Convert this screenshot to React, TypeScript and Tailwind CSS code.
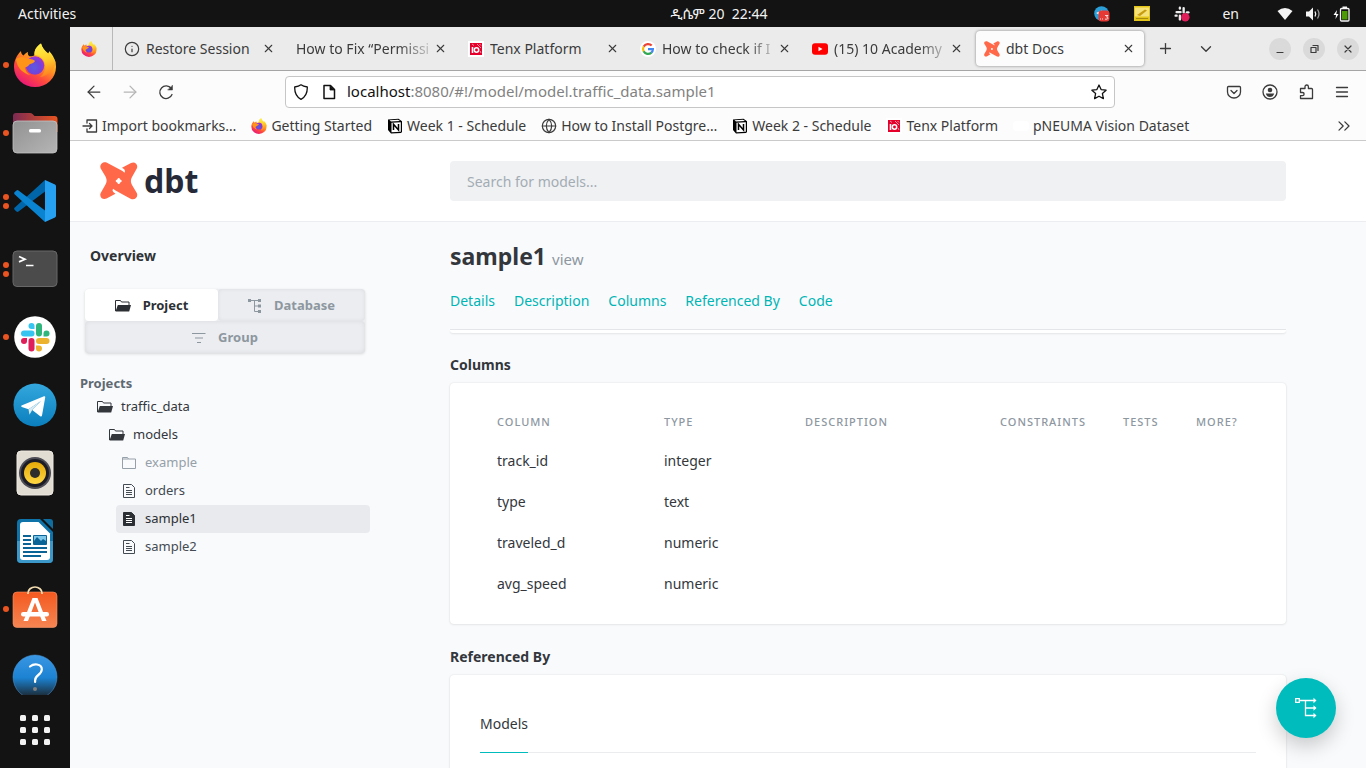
import { useId, type ReactNode } from 'react';
import { ArrowLeft, ArrowRight, ChevronDown, ChevronsRight, Globe, Info, Plus, X } from 'lucide-react';

function FirefoxIcon({ size }: { size: number }) {
  const id = useId();
  return (
    <svg width={size} height={size} viewBox="0 0 44 44" aria-hidden="true">
      <defs>
        <linearGradient id={`${id}body`} x1="0.85" y1="0.05" x2="0.25" y2="1">
          <stop offset="0.1" stopColor="#ffe73c" />
          <stop offset="0.4" stopColor="#ff9a1f" />
          <stop offset="0.68" stopColor="#ff4a3d" />
          <stop offset="1" stopColor="#e6127f" />
        </linearGradient>
        <linearGradient id={`${id}flame`} x1="0.4" y1="0" x2="0.6" y2="1">
          <stop offset="0" stopColor="#fff146" />
          <stop offset="0.5" stopColor="#ffcd2b" />
          <stop offset="1" stopColor="#ff7a1f" />
        </linearGradient>
        <radialGradient id={`${id}ball`} cx="0.45" cy="0.6" r="0.6">
          <stop offset="0" stopColor="#5a5be0" />
          <stop offset="0.6" stopColor="#7442d8" />
          <stop offset="1" stopColor="#a531d2" />
        </radialGradient>
      </defs>
      <path d="M8 8c0 2 1 4 2.500 4.500C12 10.500 13.500 9.500 15 9c-.5 2 0 3.500 1.500 4.300 2 .2 3.500 0 5-1.300C21 7 24 3 28 .5c1 4 4 7 6.500 10.500 1-.5 1.600-1.600 1.500-3 4.500 4.500 7 10 7 16a21 20 0 0 1-42 0C1 17 4 12 8 8Z" fill={`url(#${id}body)`} />
      <path d="M28 .5c-4 2.500-7 6.500-6.500 11.500 5 .5 9.500 3.500 10.500 9 1 5-1 10-5 13 8-1 15-7 15.500-15-2-7-13-10-14.500-18.500Z" fill={`url(#${id}flame)`} />
      <circle cx="22" cy="22.500" r="9.300" fill={`url(#${id}ball)`} />
      <path d="M3 16c5-3 9-2 12 0 3 0 6 .5 7 2-1 2.500-5 2.500-6 4-1.500 2-4 2.500-4 2 0 4 3 7 6 8-8-1-14-7-15-16Z" fill="#ff9418" />
    </svg>
  );
}

function FilesIcon() {
  return (
    <svg width="46" height="42" viewBox="0 0 46 42" aria-hidden="true">
      <defs>
        <linearGradient id="filesBack"><stop offset="0" stopColor="#7b2a52" /><stop offset="1" stopColor="#e95420" /></linearGradient>
        <linearGradient id="filesFront" x2="1" y2="1"><stop offset="0" stopColor="#929292" /><stop offset="1" stopColor="#b5b5b5" /></linearGradient>
      </defs>
      <path d="M1 20V4q0-3 3-3h14q1.500 0 2.500 1l2 2h20q3 0 3 3v13Z" fill="url(#filesBack)" />
      <rect x="1" y="9" width="44" height="32" rx="4" fill="url(#filesFront)" stroke="#c4c4c4" strokeWidth=".8" />
      <rect x="17" y="17" width="12" height="3.500" rx="1.500" fill="#fff" />
    </svg>
  );
}

function CodeIcon() {
  return (
    <svg width="42" height="42" viewBox="0 0 42 42" aria-hidden="true">
      <path d="M4.500 31.500q-1 .8-2 0L.8 30q-1.300-1.200 0-2.400L31 0v11.500Z" fill="#0065a9" />
      <path d="M4.500 10.500q-1-.8-2 0L.8 12q-1.300 1.200 0 2.400L31 42V30.500Z" fill="#0a84d0" />
      <path d="M31 0l10 4.500q1 .6 1 1.800v29.400q0 1.200-1 1.800L31 42V0Z" fill="#26a1f2" />
    </svg>
  );
}

function TerminalIcon() {
  return (
    <svg width="46" height="38" viewBox="0 0 46 38" aria-hidden="true">
      <rect x="1" y="1" width="44" height="35.500" rx="4" fill="#4b4b4b" stroke="#686868" />
      <path d="M7 6.500l6 2.700-6 2.700M14 15.500h7.500" fill="none" stroke="#fff" strokeWidth="1.700" />
    </svg>
  );
}

function SlackMark() {
  return (
    <>
      <g fill="#36c5f0"><rect x="7" y="14.500" width="13.500" height="6" rx="3" /><path d="M20.500 13h-3a3 3 0 1 1 3-3Z" /></g>
      <g fill="#2eb67d"><rect x="22" y="7" width="6" height="13.500" rx="3" /><path d="M29.500 20.500v-3a3 3 0 1 1 3 3Z" /></g>
      <g fill="#ecb22e"><rect x="22" y="22" width="13.500" height="6" rx="3" /><path d="M22 29.500h3a3 3 0 1 1-3 3Z" /></g>
      <g fill="#e01e5a"><rect x="14.500" y="22" width="6" height="13.500" rx="3" /><path d="M13 22v3a3 3 0 1 1-3-3Z" /></g>
    </>
  );
}

function SlackIcon() {
  return (
    <svg width="42" height="42" viewBox="0 0 42 42" aria-hidden="true">
      <circle cx="21" cy="21" r="20.800" fill="#fff" />
      <SlackMark />
    </svg>
  );
}

function TelegramIcon() {
  return (
    <svg width="44" height="44" viewBox="0 0 44 44" aria-hidden="true">
      <defs><linearGradient id="tg" y2="1" x2="0"><stop stopColor="#33a7dd" /><stop offset="1" stopColor="#0a7fbd" /></linearGradient></defs>
      <circle cx="22" cy="22" r="21.500" fill="url(#tg)" />
      <path d="M8.500 22.500 31 13.300q1.500-.4 1.200 1.200L29 32.500q-.4 1.500-1.800.7l-8-6.200L28 18 15.500 26.200l-6.700-2.300q-1.200-.7-.3-1.400Z" fill="#fff" />
      <path d="m15.500 26.200 1 5.500 2.700-4.700L28 18Z" fill="#d8ebf5" />
    </svg>
  );
}

function SpeakerIcon() {
  return (
    <svg width="38" height="46" viewBox="0 0 38 46" aria-hidden="true">
      <defs><linearGradient id="cone" x2="0" y2="1"><stop stopColor="#e5aa09" /><stop offset="1" stopColor="#ffd743" /></linearGradient></defs>
      <rect x="1" y="1" width="36" height="44" rx="4" fill="#e2ddd3" stroke="#efeae2" />
      <circle cx="19" cy="23" r="16" fill="#4d4d55" />
      <circle cx="19" cy="23" r="14" fill="#1c1c26" />
      <circle cx="19" cy="23" r="11" fill="url(#cone)" />
      <circle cx="19" cy="23" r="5" fill="#2d2d2d" />
    </svg>
  );
}

function WriterIcon() {
  return (
    <svg width="38" height="46" viewBox="0 0 38 46" aria-hidden="true">
      <path d="M5 1h19l13 13v27q0 4-4 4H5q-4 0-4-4V5q0-4 4-4Z" fill="#0d73a8" />
      <path d="M1 23h36v18q0 4-4 4H5q-4 0-4-4Z" fill="#3b98c8" />
      <path d="M7 4h15.500L34 15.500V39q0 3-3 3H7q-3 0-3-3V7q0-3 3-3Z" fill="#fff" />
      <path d="M27 1h7q3 0 3 3v7Z" fill="#0f6d9f" />
      <g fill="#0b6496">
        <rect x="7" y="17" width="8" height="2" /><rect x="7" y="21" width="8" height="2" /><rect x="7" y="25" width="8" height="2" />
        <rect x="7" y="29" width="24" height="2" /><rect x="7" y="33" width="24" height="2" /><rect x="7" y="37" width="18" height="2" />
      </g>
      <rect x="17" y="17" width="14" height="10" rx="1" fill="#0b6496" />
      <path d="M18 18h12v5l-3-2-2 2-4-4-3 4Z" fill="#7cc6ea" />
    </svg>
  );
}

function SoftwareIcon() {
  return (
    <svg width="46" height="46" viewBox="0 2 46 46" aria-hidden="true">
      <defs><linearGradient id="bag" x2="0" y2="1"><stop stopColor="#f4591f" /><stop offset="1" stopColor="#f58553" /></linearGradient></defs>
      <rect x="1" y="8" width="44" height="35.500" rx="4" fill="url(#bag)" stroke="#f8936a" strokeWidth=".6" />
      <path d="M16 10V9a7 6 0 0 1 14 0v1" fill="none" stroke="#f4dcb1" strokeWidth="1.700" />
      <path d="M20.500 14h5l9 23h-4.500L23 18.500 16 37h-4.500Z" fill="#fff" />
      <rect x="9" y="28" width="28" height="4.500" rx="2.200" fill="#fff" />
    </svg>
  );
}

function HelpIcon() {
  return (
    <svg width="46" height="46" viewBox="0 0 46 46" aria-hidden="true">
      <defs>
        <linearGradient id="help" x2="0" y2="1"><stop stopColor="#3a97e4" /><stop offset=".52" stopColor="#1c82d2" /><stop offset=".94" stopColor="#1c2a35" /></linearGradient>
      </defs>
      <circle cx="23" cy="23" r="22" fill="url(#help)" stroke="#4d9ddf" strokeWidth=".5" />
      <path d="M18 12.500q3-2.500 7-2 5 .8 4.800 5-.2 3-3.500 5.500-3.200 2.400-3.200 5.500v1.500" fill="none" stroke="#fff" strokeWidth="2.200" strokeLinecap="round" />
      <circle cx="23" cy="35" r="2" fill="#827f7c" />
    </svg>
  );
}

function DbtMark({ size }: { size: number }) {
  return (
    <svg width={size} height={size} viewBox="0 0 38 38" className="shrink-0" aria-hidden="true">
      <path d="M7 .8 22.500 9l2 1.800.5-1.800q0-1.600-3-3.200L31 1c4-2 7.500 2 5.800 5.500L32 15c-1.500 3-1.500 5 0 8l4.800 8c1.700 4-1.800 7.500-5.800 6L15.500 28.500 13 26.700l-.5 1.800q0 1.600 3 3.200l-9 4.900c-4 1.900-7.500-2.100-5.800-5.600l4.800-8.500c1.500-3 1.500-4.500 0-8L.7 6.500C-1 3 3-1 7 .8Z" fill="#ff694a" />
      <path d="M18.700 17q.6 1.400 2 2-1.400.6-2 2-.6-1.400-2-2 1.400-.6 2-2Z" fill="#fff" stroke="#fff" strokeWidth="2" strokeLinejoin="round" />
    </svg>
  );
}

function TenxIcon() {
  return (
    <svg width="16" height="16" viewBox="0 0 16 16" className="shrink-0" aria-hidden="true">
      <rect width="16" height="16" fill="#fff" />
      <rect x="2" y="2" width="12" height="12" fill="#e4002b" />
      <path d="M4.500 6v6" stroke="#fff" strokeWidth="1.600" />
      <circle cx="8.500" cy="9" r="2.200" fill="none" stroke="#fff" strokeWidth="1.500" />
      <path d="M4 3l2 1.500M9 3l4 4M11.500 3l1.500 1.500M12 10l1 2" stroke="#ffb3c0" strokeWidth=".8" />
    </svg>
  );
}

function NotionIcon() {
  return (
    <svg width="16" height="16" viewBox="0 0 16 16" className="shrink-0" aria-hidden="true">
      <path d="M1 1.500 11.500.8 15 3.200V14l-1 1-10 .5L1 12Z" fill="#000" />
      <path d="M2.500 2.200 11 1.700l2 1.300-9 .6ZM4.500 4.800l9.300-.6v9.600l-9.300.5Z" fill="#fff" />
      <path d="M6.500 12V6.300l5 5.800V6" fill="none" stroke="#000" strokeWidth="1.500" />
    </svg>
  );
}

function GoogleIcon() {
  return (
    <svg width="16" height="16" viewBox="0 0 16 16" className="shrink-0" aria-hidden="true">
      <circle cx="8" cy="8" r="8" fill="#fff" />
      <g fill="none" strokeWidth="2.200">
        <path d="M11.700 4.600A5 5 0 0 0 3.700 5.600" stroke="#ea4335" />
        <path d="M3.700 5.500a5 5 0 0 0 0 5" stroke="#fbbc05" />
        <path d="M3.600 10.300a5 5 0 0 0 7.800 1.300" stroke="#34a853" />
        <path d="M11.300 11.700A5 5 0 0 0 12.900 8.200H8" stroke="#4285f4" />
      </g>
    </svg>
  );
}

function YouTubeIcon() {
  return (
    <svg width="16" height="16" viewBox="0 0 16 16" className="shrink-0" aria-hidden="true">
      <rect x="0" y="2.300" width="16" height="11.400" rx="3" fill="#f00" />
      <path d="M6.500 5.700v4.600l4-2.300Z" fill="#fff" />
    </svg>
  );
}

type LineIconProps = { children: ReactNode; size?: number; width?: number; className?: string };
function LineIcon({ children, size = 16, width = 1.3, className = '' }: LineIconProps) {
  return (
    <svg width={size} height={size} viewBox="0 0 16 16" fill="none" stroke="currentColor" strokeWidth={width} strokeLinecap="round" strokeLinejoin="round" className={`shrink-0 ${className}`} aria-hidden="true">
      {children}
    </svg>
  );
}

function FolderOpenIcon() {
  return (
    <svg width="16" height="12" viewBox="0 0 16 12" aria-hidden="true">
      <path d="M.5 11V.5h5l1 1.500h7.500v3" fill="none" stroke="currentColor" />
      <path d="M.5 11.500 2.800 5H16l-1.800 6.500Z" fill="currentColor" />
    </svg>
  );
}

function FolderIcon() {
  return (
    <svg width="16" height="12" viewBox="0 0 16 12" aria-hidden="true" fill="none" stroke="currentColor">
      <path d="M1.500 11.500V.5h5l1 1.500h7v9.500ZM1.500 2h6" />
    </svg>
  );
}

function DocIcon({ filled }: { filled?: boolean }) {
  return (
    <svg width="14" height="14" viewBox="0 0 14 14" aria-hidden="true">
      <path d="M1.500.5h8l3 3v10h-11Z" fill={filled ? 'currentColor' : 'none'} stroke="currentColor" />
      <path d="M4 3.500h3.500M4 6.500h6M4 8.500h6M4 10.500h6" stroke={filled ? '#fff' : 'currentColor'} />
    </svg>
  );
}

function TreeIcon() {
  return (
    <svg width="14" height="14" viewBox="0 0 14 14" aria-hidden="true">
      <path d="M2 1.500h9M6.500 1.500v11H11M6.500 7H11" fill="none" stroke="currentColor" />
      <path d="M0 0h3v3H0ZM10 0h3v3h-3ZM10 5.500h3v3h-3ZM10 11h3v3h-3Z" fill="currentColor" />
    </svg>
  );
}

type DockApp = { name: string; icon: ReactNode; windows: number };
const dockApps: DockApp[] = [
  { name: 'Firefox', icon: <FirefoxIcon size={44} />, windows: 1 },
  { name: 'Files', icon: <FilesIcon />, windows: 1 },
  { name: 'Code', icon: <CodeIcon />, windows: 2 },
  { name: 'Terminal', icon: <TerminalIcon />, windows: 2 },
  { name: 'Slack', icon: <SlackIcon />, windows: 1 },
  { name: 'Telegram', icon: <TelegramIcon />, windows: 0 },
  { name: 'Rhythmbox', icon: <SpeakerIcon />, windows: 0 },
  { name: 'Writer', icon: <WriterIcon />, windows: 0 },
  { name: 'Software', icon: <SoftwareIcon />, windows: 1 },
  { name: 'Help', icon: <HelpIcon />, windows: 0 },
];

function TopBar() {
  return (
    <header className="grid h-[27px] shrink-0 grid-cols-3 items-center bg-[#131313] text-sm text-[#f2f2f2]">
      <button type="button" className="justify-self-start pl-[18px]">Activities</button>
      <button type="button" className="justify-self-center whitespace-pre pl-[72px]">{'ዲሴም 20  22:44'}</button>
      <div className="flex items-center justify-self-end pr-4">
        <svg width="16" height="16" viewBox="0 0 16 16" aria-hidden="true">
          <circle cx="7.500" cy="7.500" r="7.300" fill="#2b9fd8" />
          <path d="m2 7 6-2.500-1 5Z" fill="#fff" />
          <rect x="4.500" y="4.500" width="11" height="11" rx="3" fill="#e53935" />
          <path d="M6 13h1M8 13h1M11 9.500h3l-1.500 1.500q1.500.2 1.500 1.200 0 1.300-3 1" stroke="#fff" fill="none" strokeWidth=".8" />
        </svg>
        <svg width="16" height="15" viewBox="0 0 16 15" className="ml-6" aria-hidden="true">
          <rect width="16" height="15" fill="#e3c419" />
          <rect x="1" y="1.500" width="14" height="9" fill="#f5e27a" />
          <path d="m3 9 8-5.500 2 1L6 10Z" fill="#c79c10" />
          <path d="M2 12.500h12" stroke="#a88a0c" />
        </svg>
        <svg width="16" height="16" viewBox="4 4 34 34" className="ml-6" aria-hidden="true">
          <g fill="#eee"><rect x="7" y="14.500" width="13.500" height="5" rx="2.500" /><rect x="14" y="5" width="5" height="7" rx="2.500" /><rect x="22" y="6" width="5" height="14" rx="2.500" /><rect x="29" y="15" width="8" height="5" rx="2.500" /><rect x="5" y="22" width="7" height="5" rx="2.500" /><rect x="14" y="22" width="5" height="13" rx="2.500" /></g>
          <circle cx="28" cy="28" r="9" fill="#e01e5a" />
        </svg>
        <span className="ml-8">en</span>
        <svg width="16" height="14" viewBox="0 0 16 14" className="ml-[38px]" aria-hidden="true"><path d="M.5 4Q8-2 15.500 4L8 13Z" fill="#f4f4f4" /></svg>
        <svg width="16" height="14" viewBox="0 0 16 14" className="ml-3" aria-hidden="true">
          <path d="M1 4.500h3l4-4v13l-4-4H1Z" fill="#f4f4f4" />
          <path d="M10 4.500q1.500 2.500 0 5" stroke="#f4f4f4" strokeWidth="1.300" fill="none" />
          <path d="M12.500 2.500q3 4.500 0 9" stroke="#999" strokeWidth="1.300" fill="none" />
        </svg>
        <svg width="17" height="16" viewBox="0 0 17 16" className="ml-3" aria-hidden="true">
          <path d="M4 4 .5 9H3l-.5 4L5.500 8H3.300Z" fill="#fff" />
          <rect x="7.500" y="2.500" width="8.500" height="12.500" rx="1" fill="none" stroke="#f4f4f4" strokeWidth="1.300" />
          <rect x="9.500" y=".5" width="4.500" height="2" fill="#f4f4f4" />
          <rect x="9" y="5" width="5.500" height="8.500" fill="#4e9a06" />
        </svg>
      </div>
    </header>
  );
}

function Dock() {
  return (
    <nav aria-label="Dock" className="flex w-[70px] shrink-0 flex-col bg-[#131313]">
      <ul className="min-h-0 flex-1 overflow-hidden pt-1">
        {dockApps.map((app) => (
          <li key={app.name} className="grid h-17 grid-cols-[12px_46px_12px] items-center">
            <span className="flex flex-col items-end gap-[3px] pr-[3px]">
              {Array.from({ length: app.windows }, (_, i) => (
                <span key={i} className="size-1.5 rounded-full bg-[#e95420]" />
              ))}
            </span>
            <button type="button" aria-label={app.name} className="flex justify-center">{app.icon}</button>
          </li>
        ))}
      </ul>
      <button type="button" aria-label="Show applications" className="flex h-[73px] shrink-0 justify-center pt-5">
        <svg width="30" height="30" viewBox="0 0 30 30" aria-hidden="true" fill="#f2f2f2">
          {[0, 12, 24].map((y) => [0, 12, 24].map((x) => <rect key={`${x}-${y}`} x={x} y={y} width="6" height="6" rx="1.500" />))}
        </svg>
      </button>
    </nav>
  );
}

type Tab = { title: string; icon?: ReactNode; active?: boolean };
const tabs: Tab[] = [
  { title: 'Restore Session', icon: <Info size={16} strokeWidth={1.8} className="shrink-0" /> },
  { title: 'How to Fix “Permissi' },
  { title: 'Tenx Platform', icon: <TenxIcon /> },
  { title: 'How to check if I', icon: <GoogleIcon /> },
  { title: '(15) 10 Academy', icon: <YouTubeIcon /> },
  { title: 'dbt Docs', icon: <DbtMark size={16} />, active: true },
];
const longTitles = ['How to Fix “Permissi', 'How to check if I', '(15) 10 Academy'];

function TabStrip() {
  return (
    <div className="flex h-11 shrink-0 items-stretch border-b border-[#a5a5a5] bg-[#ebebeb] text-sm text-[#3b3b3b]">
      <button type="button" aria-label="Firefox View" className="flex w-[43px] shrink-0 items-center justify-center border-r border-[#b8b8b8] pr-1">
        <FirefoxIcon size={16} />
      </button>
      <div role="tablist" className="flex min-w-0 pl-px">
        {tabs.map((tab) => (
          <div key={tab.title} className="w-[172px] min-w-0 px-0.5 py-1">
            <div className={`flex h-full items-center rounded pl-2 pr-[7px] ${tab.active ? 'bg-[#fcfcfc] shadow-[0_0_3px_rgba(0,0,0,0.45)]' : ''}`}>
              <button type="button" role="tab" aria-selected={!!tab.active} className="flex min-w-0 flex-1 items-center gap-1.5 pt-px">
                {tab.icon}
                <span className={`min-w-0 flex-1 overflow-hidden text-left whitespace-nowrap ${longTitles.includes(tab.title) ? '[mask-image:linear-gradient(to_right,black_75%,transparent_105%)]' : ''}`}>{tab.title}</span>
              </button>
              <button type="button" aria-label={`Close ${tab.title}`} className="flex w-[18px] shrink-0 justify-center"><X size={13} strokeWidth={2} /></button>
            </div>
          </div>
        ))}
      </div>
      <div className="flex flex-1 items-center pl-[11px]">
        <button type="button" aria-label="New tab"><Plus size={17} strokeWidth={1.8} /></button>
        <button type="button" aria-label="List all tabs" className="ml-[23px]"><ChevronDown size={18} strokeWidth={1.8} /></button>
        <div className="ml-auto flex gap-3 pr-[7px]">
          {[
            ['Minimize', 'M5 11.500h6'],
            ['Restore', 'M5 6.500h5v5H5ZM7 4.500h5v5'],
            ['Close window', 'M5 5l6 6M11 5l-6 6'],
          ].map(([label, d]) => (
            <button key={label} type="button" aria-label={label} className="flex size-[22px] items-center justify-center rounded-full bg-[#dadada]">
              <LineIcon width={1.2}>
                <path d={d} />
              </LineIcon>
            </button>
          ))}
        </div>
      </div>
    </div>
  );
}

function NavBar() {
  const button = 'flex w-9 justify-center';
  return (
    <div className="flex h-[41px] shrink-0 items-center bg-[#fcfcfc] px-1.5 text-[#3b3b3b]">
      <button type="button" aria-label="Back" className={button}><ArrowLeft size={20} strokeWidth={1.5} /></button>
      <button type="button" aria-label="Forward" className={`${button} text-[#b5b5b5]`}><ArrowRight size={20} strokeWidth={1.5} /></button>
      <button type="button" aria-label="Reload" className={button}>
        <LineIcon><path d="M14 10.500A6.300 6.300 0 1 1 13.200 4.500" /><path d="M14.500 1.500V6H10Z" fill="currentColor" strokeWidth=".5" /></LineIcon>
      </button>
      <div className="mx-[101px] flex h-8 min-w-0 flex-1 items-center rounded border border-[#c6c6c6] bg-white px-[7px] text-[15px] text-[#111]">
        <LineIcon><path d="M8 .8c2 1.500 4 1.900 6.300 2.200.2 6-1.800 10-6.300 12.300C3.500 13 1.500 9 1.700 3 4 2.700 6 2.300 8 .8Z" /></LineIcon>
        <LineIcon className="ml-3" width={1.5}><path d="M3 1.500h6.500L13.500 5.500V14.500H3Z" /><path d="M9 1.500V6h4.500Z" fill="currentColor" strokeWidth=".8" /></LineIcon>
        <div role="textbox" aria-label="Address" className="ml-2.5 min-w-0 flex-1 overflow-hidden whitespace-nowrap">
          localhost<span className="text-[#828282]">:8080/#!/model/model.traffic_data.sample1</span>
        </div>
        <button type="button" aria-label="Bookmark this page">
          <LineIcon><path d="m8 1 2.100 4.600 5 .6-3.700 3.400 1 5L8 12.200l-4.400 2.400 1-5L.9 6.200l5-.6Z" /></LineIcon>
        </button>
      </div>
      <button type="button" aria-label="Save to Pocket" className={button}><LineIcon><path d="M2.500 2.500h11q1 0 1 1V8a6.500 6 0 0 1-13 0V3.500q0-1 1-1ZM5 6.500l3 3 3-3" /></LineIcon></button>
      <button type="button" aria-label="Account" className={button}>
        <LineIcon><circle cx="8" cy="8" r="7" /><circle cx="8" cy="6" r="2.300" fill="currentColor" stroke="none" /><path d="M3.800 9.500h8.400q-1 3.500-4.200 3.500t-4.200-3.500Z" fill="currentColor" stroke="none" /></LineIcon>
      </button>
      <button type="button" aria-label="Extensions" className={button}>
        <LineIcon><path d="M7 4.500V2.700a1.700 1.700 0 0 1 3.400 0v1.800h3.100q1 0 1 1v9H2.500V11.700h2a1.600 1.600 0 0 0 0-3.200H2.500v-4Z" /></LineIcon>
      </button>
      <button type="button" aria-label="Menu" className={button}><LineIcon><path d="M2.500 3.500h11M2.500 8h11M2.500 12.500h11" /></LineIcon></button>
    </div>
  );
}

const bookmarks: { title: string; icon: ReactNode }[] = [
  { title: 'Import bookmarks…', icon: <LineIcon><path d="M5 5V2h9.500v12H5v-3M1 8h8.500M7.500 5.500 10 8l-2.500 2.500" /></LineIcon> },
  { title: 'Getting Started', icon: <FirefoxIcon size={16} /> },
  { title: 'Week 1 - Schedule', icon: <NotionIcon /> },
  { title: 'How to Install Postgre…', icon: <Globe size={16} strokeWidth={1.8} /> },
  { title: 'Week 2 - Schedule', icon: <NotionIcon /> },
  { title: 'Tenx Platform', icon: <TenxIcon /> },
  { title: 'pNEUMA Vision Dataset', icon: <span className="h-2.5 w-4 rounded bg-white" /> },
];

function BookmarksBar() {
  return (
    <div className="flex h-[29px] shrink-0 items-center border-b border-[#cacaca] bg-[#fcfcfc] px-3 text-sm text-[#3b3b3b]">
      <div className="flex min-w-0 flex-1 gap-[15px]">
        {bookmarks.map((b) => (
          <a key={b.title} href="#" className="flex items-center gap-1 whitespace-nowrap">{b.icon}{b.title}</a>
        ))}
      </div>
      <button type="button" aria-label="More bookmarks"><ChevronsRight size={20} strokeWidth={1.5} /></button>
    </div>
  );
}

const treeItems = [
  { name: 'traffic_data', icon: <FolderOpenIcon />, style: 'ml-[22px] gap-2 pl-[5px] text-[#33373c]' },
  { name: 'models', icon: <FolderOpenIcon />, style: 'ml-[34px] gap-2 pl-[5px] text-[#33373c]' },
  { name: 'example', icon: <FolderIcon />, style: 'ml-[46px] gap-2 pl-[5px] text-[#95a0a8]' },
  { name: 'orders', icon: <DocIcon />, style: 'ml-[46px] gap-[9px] pl-1.5 text-[#444b52]' },
  { name: 'sample1', icon: <DocIcon filled />, style: 'ml-[46px] gap-[9px] rounded bg-[#e9eaee] pl-1.5 text-[#2c3034]' },
  { name: 'sample2', icon: <DocIcon />, style: 'ml-[46px] gap-[9px] pl-1.5 text-[#444b52]' },
];

function Sidebar() {
  const segment = 'flex h-8 items-center justify-center gap-3 rounded pt-px';
  return (
    <aside className="w-[300px] shrink-0 text-[13px]">
      <a href="#overview" className="mt-6 block pl-5 text-sm leading-5 font-bold text-[#2f3337]">Overview</a>
      <div className="mr-[5px] ml-[15px] mt-[23px] grid grid-cols-[133px_1fr] rounded bg-[#ecedf1] font-bold text-[#8d979f] shadow-[0_1px_3px_rgba(0,0,0,0.14)]">
        <button type="button" className={`${segment} bg-white text-[#2c3034]`}><FolderOpenIcon />Project</button>
        <button type="button" className={`${segment} shadow-[inset_0_0_4px_rgba(0,0,0,0.07)]`}><TreeIcon />Database</button>
        <button type="button" className={`${segment} col-span-2 shadow-[inset_0_0_5px_rgba(0,0,0,0.08)]`}>
          <svg width="14" height="10" viewBox="0 0 14 10" aria-hidden="true"><path d="M0 .5h13.500M3 5h8M5 9.500h4" stroke="currentColor" /></svg>
          Group
        </button>
      </div>
      <h2 className="mt-5 pl-2.5 leading-5 font-bold text-[#5f6972]">Projects</h2>
      <ul>
        {treeItems.map((item) => (
          <li key={item.name}>
            <a href={`#${item.name}`} className={`flex h-7 items-center ${item.style}`}>
              {item.icon}{item.name}
            </a>
          </li>
        ))}
      </ul>
    </aside>
  );
}

const columns = [
  ['track_id', 'integer'],
  ['type', 'text'],
  ['traveled_d', 'numeric'],
  ['avg_speed', 'numeric'],
];

const card = 'rounded bg-white shadow-[0_0_2px_rgba(0,0,0,0.12),0_1px_3px_rgba(0,0,0,0.05)]';

function ModelPage() {
  return (
    <main className="ml-20 mr-20 min-w-0 flex-1 text-sm text-[#33373c]">
      <h1 className="mt-[18px] text-[23px] leading-8 font-bold">
        sample1 <small className="text-[15px] font-normal text-[#8d979f]">view</small>
      </h1>
      <nav aria-label="Sections" className="mt-4 flex gap-[19px] leading-5 text-[#00b5b5]">
        {['Details', 'Description', 'Columns', 'Referenced By', 'Code'].map((name) => (
          <a key={name} href={`#${name}`}>{name}</a>
        ))}
      </nav>
      <div className="mt-[18px] border-t border-[#e4e6e9]">
        <div className="h-[3px] rounded-b bg-white shadow-[0_1px_2px_rgba(0,0,0,0.09)]" />
      </div>
      <h2 className="mt-[22px] leading-5 font-bold">Columns</h2>
      <div className={`mt-2 px-[30px] py-5 ${card}`}>
        <table className="w-full table-fixed text-left">
          <colgroup>
            <col className="w-[167px]" />
            <col className="w-[141px]" />
            <col />
            <col className="w-[123px]" />
            <col className="w-[73px]" />
            <col className="w-[77px]" />
          </colgroup>
          <thead>
            <tr className="h-[37px] text-[11px] tracking-[1px] text-[#8d979f] uppercase">
              {['Column', 'Type', 'Description', 'Constraints', 'Tests', 'More?'].map((name) => (
                <th key={name} scope="col" className="pl-[17px] font-medium whitespace-nowrap">{name}</th>
              ))}
            </tr>
          </thead>
          <tbody>
            {columns.map(([name, type]) => (
              <tr key={name} className="h-[41px]">
                <td className="pl-[17px]">{name}</td>
                <td className="pl-[17px]">{type}</td>
                <td /><td /><td /><td />
              </tr>
            ))}
          </tbody>
        </table>
      </div>
      <h2 className="mt-[23px] leading-5 font-bold">Referenced By</h2>
      <div className={`mt-2 px-[30px] pt-5 pb-20 ${card}`}>
        <div role="tablist" className="flex h-[58px] border-b border-[#ebecee]">
          <button type="button" role="tab" aria-selected="true" className="-mb-px flex flex-col">
            <span className="flex flex-1 items-center">Models</span>
            <span className="h-px w-full bg-[#00bcbc]" />
          </button>
        </div>
      </div>
    </main>
  );
}

export default function App() {
  return (
    <div className="flex h-screen flex-col overflow-hidden font-['Noto_Sans','Noto_Sans_Ethiopic',sans-serif]">
      <TopBar />
      <div className="flex min-h-0 flex-1">
        <Dock />
        <div className="flex min-w-0 flex-1 flex-col">
          <TabStrip />
          <NavBar />
          <BookmarksBar />
          <div className="relative flex min-h-0 flex-1 flex-col bg-[#f9fafc]">
            <div className="flex h-[81px] shrink-0 items-center border-b border-[#ebedf0] bg-white pr-20">
              <a href="#home" aria-label="dbt" className="flex w-[380px] shrink-0 items-center gap-1.5 pl-[30px] text-[32px] leading-10 font-bold text-[#262a38]">
                <DbtMark size={38} />dbt
              </a>
              <input type="search" aria-label="Search for models" placeholder="Search for models..." className="h-10 min-w-0 flex-1 rounded bg-[#f0f1f3] px-[17px] text-sm outline-none placeholder:text-[#a3acb3]" />
            </div>
            <div className="flex min-h-0 flex-1 overflow-hidden">
              <Sidebar />
              <ModelPage />
            </div>
            <button type="button" aria-label="View lineage graph" className="absolute right-[30px] bottom-[30px] flex size-15 items-center justify-center rounded-full bg-[#00bcbc] text-white shadow-[0_8px_20px_rgba(0,0,0,0.2)]">
              <svg width="22" height="22" viewBox="0 0 22 22" fill="none" stroke="currentColor" strokeWidth="1.300" aria-hidden="true">
                <path d="M.7 1.700h3.600v3.600H.7ZM4.500 3.500h15M10.500 3.500v15h9M10.500 11h9" />
                <path d="M18.500.8v5.400L21.500 3.500ZM18.500 8.300v5.400l3-2.700ZM18.500 15.800v5.400l3-2.700Z" fill="currentColor" stroke="none" />
              </svg>
            </button>
          </div>
        </div>
      </div>
    </div>
  );
}
